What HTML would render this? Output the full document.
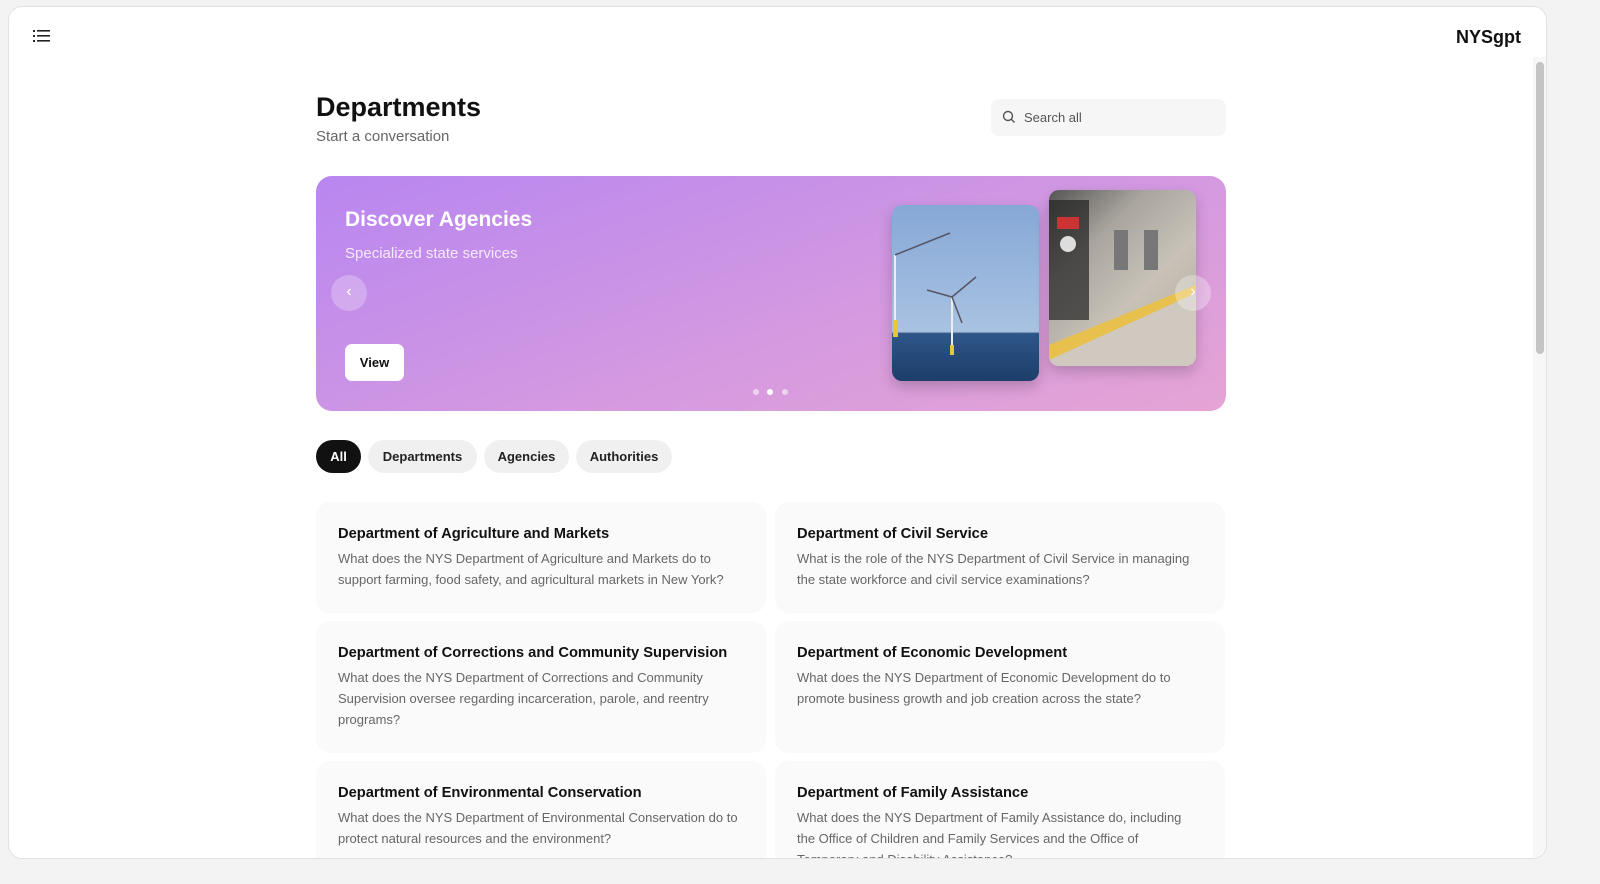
<!DOCTYPE html>
<html><head><style>
*{box-sizing:border-box;margin:0;padding:0}
body{width:1600px;height:884px;background:#f3f3f3;font-family:"Liberation Sans",sans-serif;overflow:hidden;position:relative}
.frame{position:absolute;left:8px;top:6px;width:1539px;height:853px;background:#fff;border:1px solid #e2e2e2;border-radius:14px;overflow:hidden}
.sb{position:absolute;left:1527px;top:55px;width:8px;height:292px;background:#c4c4c4;border-radius:4px}
.sbt{position:absolute;left:1524px;top:50px;width:14px;height:803px;background:#f7f7f7}
.abs{position:absolute}
h1{position:absolute;left:307px;top:85px;font-size:27px;font-weight:700;color:#111}
.sub{left:307px;top:121px;font-size:15px;color:#666}
.search{left:982px;top:92px;width:235px;height:37px;background:#f6f6f6;border-radius:8px;font-size:13px;color:#555;padding:11px 0 0 33px}
.hero{left:307px;top:169px;width:910px;height:235px;border-radius:16px;background:linear-gradient(160deg,#b886f0 0%,#d59ae0 60%,#e6a4d4 100%);overflow:hidden}
.pill{position:absolute;top:433px;height:33px;border-radius:17px;background:#f0f0f0;font-size:13px;font-weight:700;color:#222;padding-top:9px;text-align:center}
.card{position:absolute;width:450px;background:#fafafa;border-radius:14px;padding:24px 22px}
.card b{display:block;font-size:14.7px;color:#111;margin-bottom:6px}
.card p{font-size:13px;line-height:21px;color:#666}
</style></head><body>
<div class="frame">
<div class="sbt"></div><div class="sb"></div>
<svg class="abs" style="left:24px;top:22px" width="18" height="15" viewBox="0 0 18 15"><g fill="#222"><rect x="0" y="1" width="2" height="2"/><rect x="0" y="6" width="2" height="2"/><rect x="0" y="11" width="2" height="2"/><rect x="4" y="1" width="13" height="1.6"/><rect x="4" y="6" width="13" height="1.6"/><rect x="4" y="11" width="13" height="1.6"/></g></svg>
<div class="abs" style="right:25px;top:20px;font-size:18px;font-weight:700;color:#111">NYSgpt</div>
<h1>Departments</h1>
<div class="abs sub">Start a conversation</div>
<div class="abs search"><svg class="abs" style="left:11px;top:11px" width="14" height="14" viewBox="0 0 14 14"><circle cx="6" cy="6" r="4.5" fill="none" stroke="#555" stroke-width="1.4"/><line x1="9.3" y1="9.3" x2="12.5" y2="12.5" stroke="#555" stroke-width="1.4"/></svg>Search all</div>
<div class="abs hero">
<div class="abs" style="left:29px;top:32px;font-size:21px;font-weight:700;color:#fff">Discover Agencies</div>
<div class="abs" style="left:29px;top:69px;font-size:15px;color:#f6eaff">Specialized state services</div>
<div class="abs" style="left:15px;top:99px;width:36px;height:36px;border-radius:50%;background:rgba(255,255,255,.25);color:#fff;text-align:center;line-height:34px;font-size:16px">‹</div>
<div class="abs" style="left:29px;top:168px;width:59px;height:37px;border-radius:7px;background:#fff;font-size:13px;font-weight:700;color:#111;text-align:center;line-height:37px">View</div>
<div class="abs" style="left:576px;top:29px;width:147px;height:176px;border-radius:10px;overflow:hidden;background:linear-gradient(#86a8d6 0%,#a9c2e2 72%,#2d5688 73%,#1d3e6a 100%);box-shadow:0 6px 14px rgba(0,0,0,.2)">
<svg width="147" height="176"><g stroke="#eee" stroke-width="2"><line x1="3" y1="50" x2="3" y2="130"/><line x1="60" y1="92" x2="60" y2="150"/></g><g stroke="#556" stroke-width="1.5"><line x1="3" y1="50" x2="58" y2="28"/><line x1="60" y1="92" x2="84" y2="72"/><line x1="60" y1="92" x2="35" y2="85"/><line x1="60" y1="92" x2="70" y2="118"/></g><rect x="1" y="115" width="5" height="17" fill="#e5c83a"/><rect x="58" y="140" width="4" height="10" fill="#e5c83a"/></svg></div>
<div class="abs" style="left:733px;top:14px;width:147px;height:176px;border-radius:10px;overflow:hidden;background:linear-gradient(135deg,#555 0%,#a9a59e 30%,#c8c2b8 60%,#b0a898 100%);box-shadow:0 6px 14px rgba(0,0,0,.2)">
<svg width="147" height="176"><rect x="0" y="10" width="40" height="120" fill="#222" opacity=".7"/><polygon points="0,160 147,100 147,176 0,176" fill="#cfc9bf"/><polygon points="0,155 147,95 147,103 0,170" fill="#e8c04e"/><rect x="8" y="27" width="22" height="12" fill="#c33"/><circle cx="19" cy="54" r="8" fill="#ddd"/><rect x="65" y="40" width="14" height="40" fill="#777"/><rect x="95" y="40" width="14" height="40" fill="#777"/></svg></div>
<div class="abs" style="left:859px;top:99px;width:36px;height:36px;border-radius:50%;background:rgba(255,255,255,.3);color:#fff;text-align:center;line-height:34px;font-size:16px">›</div>
<div class="abs" style="left:437px;top:213px;width:6px;height:6px;border-radius:50%;background:rgba(255,255,255,.55)"></div>
<div class="abs" style="left:451px;top:213px;width:6px;height:6px;border-radius:50%;background:#fff"></div>
<div class="abs" style="left:466px;top:213px;width:6px;height:6px;border-radius:50%;background:rgba(255,255,255,.55)"></div>
</div>
<div class="pill" style="left:307px;width:45px;background:#111;color:#fff">All</div>
<div class="pill" style="left:359px;width:109px">Departments</div>
<div class="pill" style="left:475px;width:85px">Agencies</div>
<div class="pill" style="left:567px;width:96px">Authorities</div>
<div class="card" style="left:307px;top:495px;height:111px"><b>Department of Agriculture and Markets</b><p>What does the NYS Department of Agriculture and Markets do to support farming, food safety, and agricultural markets in New York?</p></div>
<div class="card" style="left:766px;top:495px;height:111px"><b>Department of Civil Service</b><p>What is the role of the NYS Department of Civil Service in managing the state workforce and civil service examinations?</p></div>
<div class="card" style="left:307px;top:614px;height:132px"><b>Department of Corrections and Community Supervision</b><p>What does the NYS Department of Corrections and Community Supervision oversee regarding incarceration, parole, and reentry programs?</p></div>
<div class="card" style="left:766px;top:614px;height:132px"><b>Department of Economic Development</b><p>What does the NYS Department of Economic Development do to promote business growth and job creation across the state?</p></div>
<div class="card" style="left:307px;top:754px;height:132px"><b>Department of Environmental Conservation</b><p>What does the NYS Department of Environmental Conservation do to protect natural resources and the environment?</p></div>
<div class="card" style="left:766px;top:754px;height:132px"><b>Department of Family Assistance</b><p>What does the NYS Department of Family Assistance do, including the Office of Children and Family Services and the Office of Temporary and Disability Assistance?</p></div>
</div>
</body></html>
